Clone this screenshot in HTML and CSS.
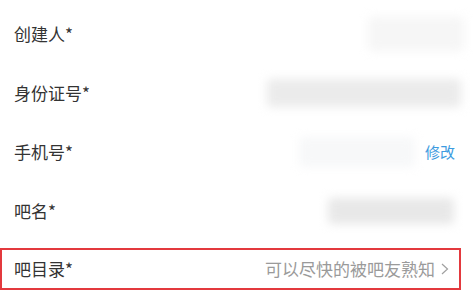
FILE: index.html
```html
<!DOCTYPE html>
<html lang="zh">
<head>
<meta charset="utf-8">
<link rel="stylesheet" href="styles.css">
</head>
<body>
<div class="form">
  <div class="row">
    <span class="label">创建人*</span>
    <div class="blur blur-1"></div>
  </div>
  <div class="row">
    <span class="label">身份证号*</span>
    <div class="blur blur-2"></div>
  </div>
  <div class="row">
    <span class="label">手机号*</span>
    <div class="right">
      <div class="blur blur-3"></div>
      <span class="link">修改</span>
    </div>
  </div>
  <div class="row">
    <span class="label">吧名*</span>
    <div class="blur blur-4"></div>
  </div>
  <div class="row row-last">
    <div class="box">
      <span class="label">吧目录*</span>
      <div class="right">
        <span class="placeholder">可以尽快的被吧友熟知</span>
        <svg class="chev" width="8" height="12" viewBox="0 0 8 12"><path d="M1 1 L6.5 6 L1 11" fill="none" stroke="#a0a0a0" stroke-width="1.2"/></svg>
      </div>
    </div>
  </div>
</div>
</body>
</html>
```
FILE: styles.css
```css
html, body {
  margin: 0;
  padding: 0;
  background: #ffffff;
}
body {
  font-family: "Noto Sans CJK SC", "Noto Sans", sans-serif;
  color: #333333;
  width: 473px;
  height: 305px;
  overflow: hidden;
}
.form {
  padding-top: 4px;
}
.row {
  height: 59px;
  display: flex;
  align-items: center;
  justify-content: space-between;
  padding-left: 14px;
  box-sizing: border-box;
}
.label {
  font-size: 17px;
  line-height: 20px;
  color: #333333;
}
.right {
  display: flex;
  align-items: center;
}
.blur {
  filter: blur(5px);
  border-radius: 4px;
}
.blur-1 {
  width: 96px;
  height: 34px;
  background: #f6f6f6;
  margin-right: 9px;
}
.blur-2 {
  width: 194px;
  height: 28px;
  background: #ebebeb;
  margin-right: 12px;
}
.blur-3 {
  width: 116px;
  height: 30px;
  background: #f7f8f9;
  margin-right: 10px;
}
.link {
  font-size: 15px;
  line-height: 20px;
  color: #3d9be0;
  margin-right: 18px;
}
.blur-4 {
  width: 126px;
  height: 26px;
  background: #e8e8e8;
  margin-right: 19px;
}
.row-last {
  padding: 8px 0 9px 0;
  align-items: stretch;
}
.box {
  flex: 1;
  margin-right: 12px;
  border: 2px solid #e3393e;
  display: flex;
  align-items: center;
  justify-content: space-between;
  padding: 0 10px 0 12px;
}
.placeholder {
  font-size: 17px;
  line-height: 20px;
  color: #9a9a9a;
}
.chev {
  margin-left: 6px;
  display: block;
}
```
